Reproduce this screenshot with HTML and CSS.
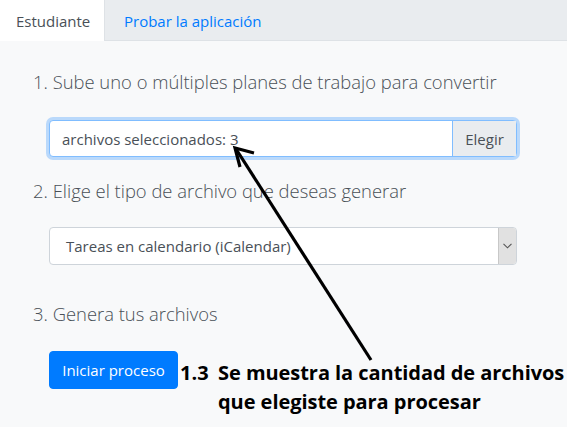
FILE: index.html
```html
<!DOCTYPE html>
<html lang="es">
<head>
<meta charset="utf-8">
<link rel="stylesheet" href="styles.css">
</head>
<body>
<nav class="tabs">
  <span class="tab active">Estudiante</span>
  <span class="tab link">Probar la aplicación</span>
</nav>
<main class="content">
  <h5 class="step">1. Sube uno o múltiples planes de trabajo para convertir</h5>
  <div class="input-group">
    <div class="file-label">archivos seleccionados: 3</div>
    <div class="file-btn">Elegir</div>
  </div>
  <h5 class="step">2. Elige el tipo de archivo que deseas generar</h5>
  <div class="select">
    <span class="select-text">Tareas en calendario (iCalendar)</span>
    <span class="select-arrow"><svg width="9" height="6" viewBox="0 0 9 6"><path d="M0.5 0.8 L4.5 4.8 L8.5 0.8" fill="none" stroke="#555" stroke-width="1.1"/></svg></span>
  </div>
  <h5 class="step step3">3. Genera tus archivos</h5>
  <div class="action-row">
    <button class="btn-primary">Iniciar proceso</button>
    <span class="note-num">1.3</span>
    <div class="note-text">Se muestra la cantidad de archivos<br>que elegiste para procesar</div>
  </div>
</main>
<svg class="arrow" width="567" height="427" viewBox="0 0 567 427">
  <path d="M371 360 L236 149" stroke="#000" stroke-width="3.2" fill="none"/>
  <path d="M254 153 L235 148 L240 167" stroke="#000" stroke-width="3.2" fill="none" stroke-linejoin="miter"/>
</svg>
</body>
</html>
```
FILE: styles.css
```css
* { box-sizing: border-box; }
html, body { margin: 0; padding: 0; }
body {
  width: 567px;
  height: 427px;
  overflow: hidden;
  background: #f8f9fa;
  font-family: "Open Sans", "Noto Sans", sans-serif;
  color: #495057;
  position: relative;
}
.tabs {
  display: flex;
  height: 41px;
  background: #e9ecef;
  border-bottom: 1px solid #dee2e6;
}
.tab {
  display: flex;
  align-items: center;
  font-size: 15px;
  height: 41px;
}
.tab.active {
  background: #fff;
  color: #495057;
  padding: 0 16px 0 16px;
  width: 105px;
  border-right: 1px solid #dee2e6;
}
.tab.link {
  color: #007bff;
  padding-left: 19px;
}
.content {
  padding: 0 49px 0 33px;
}
.step {
  margin: 0;
  font-size: 18.4px;
  font-weight: 300;
  color: #495057;
  line-height: 24px;
}
.content > .step:first-child { margin-top: 29px; }
.input-group {
  margin: 26px 0 0 16px;
  height: 37px;
  display: flex;
  border: 1px solid #80bdff;
  border-radius: 4px;
  box-shadow: 0 0 0 3px rgba(0,123,255,.25);
  background: #fff;
  width: 468px;
}
.file-label {
  flex: 1;
  display: flex;
  align-items: center;
  padding-left: 12px;
  font-size: 15px;
  color: #495057;
}
.file-btn {
  width: 64px;
  display: flex;
  align-items: center;
  justify-content: center;
  background: #e9ecef;
  border-left: 1px solid #80bdff;
  font-size: 15px;
  color: #495057;
}
.input-group + .step { margin-top: 22px; }
.select {
  margin: 24px 0 0 16px;
  width: 468px;
  height: 38px;
  display: flex;
  background: #fff;
  border: 1px solid #ced4da;
  border-radius: 4px;
}
.select-text {
  flex: 1;
  display: flex;
  align-items: center;
  padding-left: 16px;
  font-size: 15px;
  color: #495057;
}
.select-arrow {
  width: 18px;
  display: flex;
  align-items: center;
  justify-content: center;
  background: #e1e1e1;
  border-left: 1px solid #c8c8c8;
  border-radius: 0 3px 3px 0;
}
.step3 { margin-top: 37px; }
.action-row {
  display: flex;
  align-items: flex-start;
  margin: 25px -49px 0 16px;
}
.action-row > * { flex-shrink: 0; }
.btn-primary {
  font-family: inherit;
  background: #007bff;
  color: #fff;
  border: 1px solid #007bff;
  border-radius: 4px;
  height: 38px;
  width: 129px;
  font-size: 15px;
  padding: 0;
}
.note-num, .note-text {
  font-family: "Open Sans", sans-serif;
  font-weight: 700;
  color: #000;
  font-size: 20px;
  line-height: 29px;
}
.note-num { margin: 7px 0 0 2px; width: 38px; }
.note-text { margin-top: 7px; letter-spacing: -0.05px; white-space: nowrap; }
.arrow {
  position: absolute;
  left: 0;
  top: 0;
  pointer-events: none;
}
```
